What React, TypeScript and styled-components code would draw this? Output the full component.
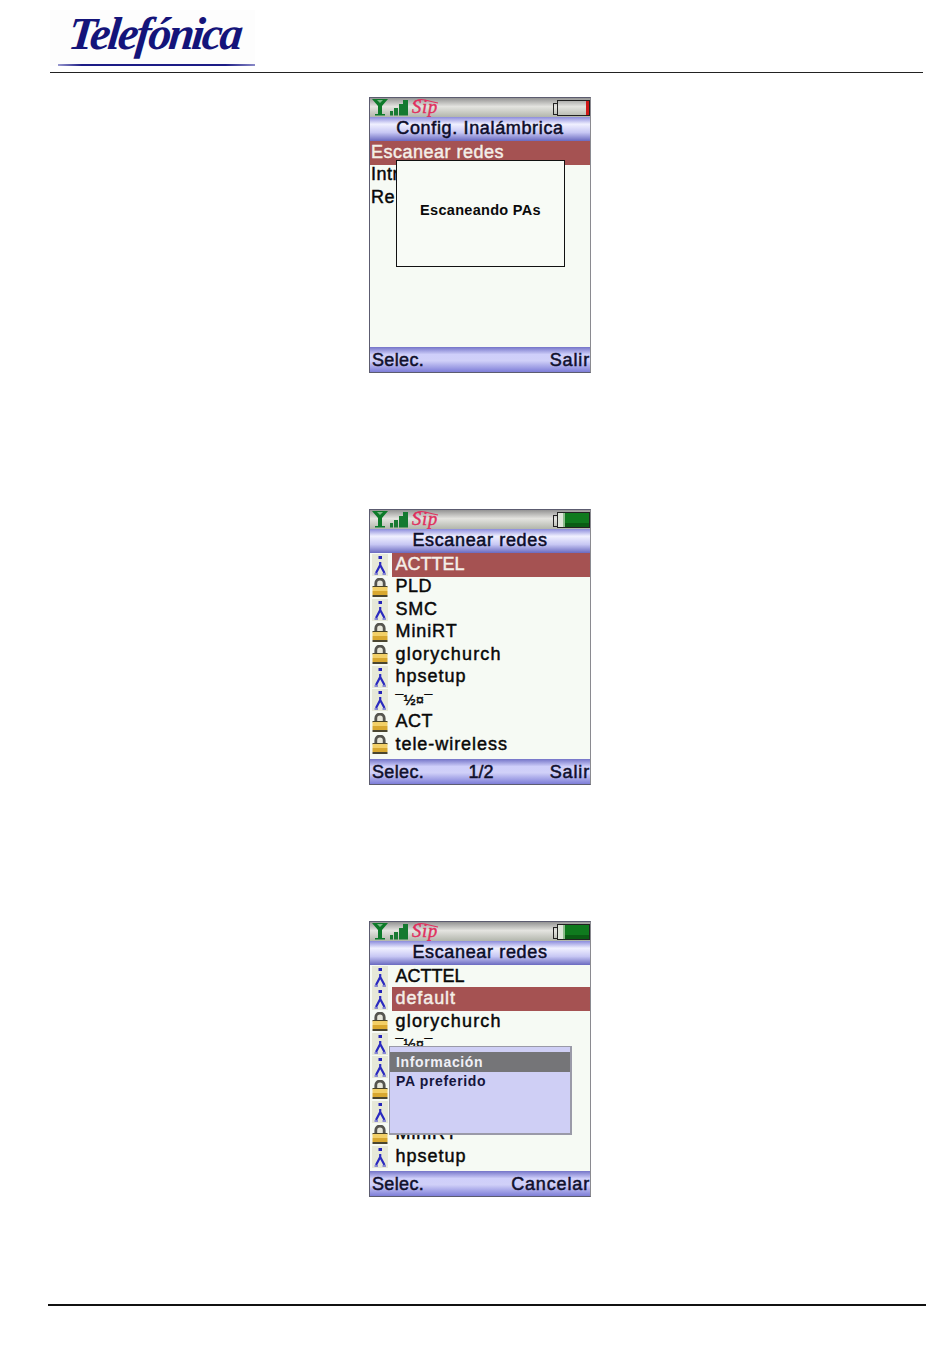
import React from "react";
import styled, { createGlobalStyle } from "styled-components";

const Global = createGlobalStyle`
  html, body { margin: 0; padding: 0; background: #fff; }
  body { font-family: "Liberation Sans", Arial, sans-serif; }
`;

const Page = styled.div`
  width: 950px;
  height: 1360px;
  background: #fff;
  display: flex;
  flex-direction: column;
  overflow: hidden;
`;

const Header = styled.header`
  width: 873px;
  height: 62px;
  margin-left: 50px;
  border-bottom: 1px solid #222;
  padding-top: 10px;
`;

const LogoBox = styled.div`
  width: 205px;
  height: 56px;
  background: #fdfdfd;
  display: flex;
  flex-direction: column;
  align-items: center;
  box-sizing: border-box;
  padding-left: 4px;
`;

const LogoText = styled.span`
  font-family: "Liberation Serif", serif;
  font-style: italic;
  font-weight: 700;
  font-size: 46px;
  line-height: 47px;
  letter-spacing: -2.6px;
  color: #14147a;
  transform: skewX(-6deg);
  flex: none;
`;

const LogoRule = styled.div`
  width: 197px;
  height: 2px;
  margin-top: 7px;
  align-self: flex-end;
  background: linear-gradient(90deg, #9a9ad0, #1c1c86 12%, #1c1c86 85%, #8a8ac8);
`;

const Main = styled.main`
  display: flex;
  flex-direction: column;
  align-items: center;
  gap: 136px;
  padding-left: 10px;
  margin-top: 24px;
`;

const Phone = styled.section`
  position: relative;
  width: 222px;
  height: 276px;
  box-sizing: border-box;
  border: 1px solid #5c5c70;
  border-right-color: #8a8a90;
  background: #f6faf4;
  display: flex;
  flex-direction: column;
  overflow: hidden;
`;

const StatusBar = styled.div`
  height: 19px;
  flex: none;
  display: flex;
  align-items: center;
  justify-content: space-between;
  padding: 0 0 0 1px;
  background: linear-gradient(#949494, #e4e4e0 45%, #b2b6ac);
`;

const TitleBar = styled.div`
  height: 24px;
  flex: none;
  box-sizing: border-box;
  padding-bottom: 1px;
  display: flex;
  align-items: center;
  justify-content: center;
  font-size: 18px;
  letter-spacing: 0.65px;
  color: #0c0c28;
  -webkit-text-stroke: 0.5px #0c0c28;
  background: linear-gradient(#8c8cdc, #f0f0ff 30%, #c8c8f4 64%, #6a6ac0);
`;

const List = styled.div`
  flex: 1;
  display: flex;
  flex-direction: column;
  padding-top: 0.5px;
`;

const Row = styled.div`
  height: 22.5px;
  flex: none;
  display: flex;
  align-items: center;
  font-size: 18px;
  color: #080808;
  -webkit-text-stroke: 0.45px #080808;
`;

const RowIcon = styled.span`
  width: 22px;
  flex: none;
  display: flex;
  justify-content: center;
  padding-right: 3px;
  box-sizing: border-box;
`;

const RowLabel = styled.span<{ $selected?: boolean; $plain?: boolean; $spacing?: number }>`
  flex: 1;
  height: 24px;
  line-height: 23px;
  margin: -0.75px 0;
  padding-left: ${(p) => (p.$plain ? "1px" : "3.5px")};
  letter-spacing: ${(p) => p.$spacing ?? 0.5}px;
  white-space: nowrap;
  background: ${(p) => (p.$selected ? "#a55252" : "transparent")};
  color: ${(p) => (p.$selected ? "#f4efe8" : "inherit")};
  -webkit-text-stroke-color: ${(p) => (p.$selected ? "#f4efe8" : "inherit")};
`;

const SmallGlyphs = styled.span`
  font-size: 14px;
  letter-spacing: 0.6px;
`;

const SoftKeys = styled.div`
  height: 25px;
  flex: none;
  display: grid;
  grid-template-columns: 1fr auto 1fr;
  align-items: center;
  padding: 1px 0 0 2px;
  box-sizing: border-box;
  font-size: 18px;
  color: #10102c;
  -webkit-text-stroke: 0.5px #10102c;
  background: linear-gradient(#7474c8, #cfcffa 30%, #d0d0f8 55%, #7e7ed8);
`;

const SoftLeft = styled.span`
  letter-spacing: 0.35px;
`;

const SoftRight = styled.span`
  justify-self: end;
  letter-spacing: 0.85px;
`;

const ScanDialog = styled.div`
  position: absolute;
  left: 26px;
  top: 62px;
  width: 169px;
  height: 107px;
  box-sizing: border-box;
  border: 1px solid #111;
  background: #f8fbf6;
  display: flex;
  align-items: center;
  justify-content: center;
  padding-bottom: 7px;
  font-size: 14.5px;
  font-weight: 700;
  letter-spacing: 0.3px;
  color: #0a0a0a;
`;

const InfoPopup = styled.div`
  position: absolute;
  left: 19px;
  top: 124px;
  width: 183px;
  height: 89px;
  box-sizing: border-box;
  border: 1px solid #9a9aa8;
  border-width: 1px 2px 2px 1px;
  background: #cfcff5;
  padding-top: 5px;
  font-size: 14px;
  font-weight: 700;
  letter-spacing: 0.65px;
`;

const PopupHead = styled.div`
  height: 20px;
  line-height: 20px;
  padding-left: 6px;
  background: #757578;
  color: #f0f0f6;
`;

const PopupLine = styled.div`
  height: 20px;
  line-height: 19px;
  padding-left: 6px;
  color: #15153c;
`;

const Footer = styled.footer`
  width: 878px;
  margin: 107px 0 0 48px;
  border-top: 2px solid #111;
`;

const Signal = () => (
  <svg width="68" height="19" viewBox="0 0 68 19">
    <path d="M1 1h16l-6 7v9H7V8z" fill="#0d7a2a" />
    <path d="M6 2h6l-3 3z" fill="#7fb88a" />
    <rect x="4" y="16" width="10" height="1.5" fill="#0d7a2a" />
    <rect x="19" y="13" width="3" height="4.5" fill="#1a7a34" />
    <rect x="23" y="10" width="4" height="7.5" fill="#1a7a34" />
    <rect x="28" y="6" width="4" height="11.5" fill="#157a30" />
    <rect x="32" y="2" width="5" height="15.5" fill="#157a30" />
    <text x="41" y="14.5" fontFamily="Liberation Serif, serif" fontStyle="italic" fontWeight="400" fontSize="18.5" letterSpacing="0.8" stroke="#e0305e" strokeWidth="0.4" fill="#e0305e">Sip</text>
    <path d="M42 6q4-6 12-4t13 3" stroke="#e0305e" strokeWidth="1.2" fill="none" />
  </svg>
);

const Battery = ({ full }: { full?: boolean }) => (
  <svg width="37" height="16" viewBox="0 0 37 16">
    <rect x="0.5" y="3.5" width="4" height="11" fill="none" stroke="#222" />
    {full ? (
      <>
        <rect x="4" y="1" width="33" height="14" fill="#dfe6da" />
        <rect x="12" y="1" width="25" height="14" fill="#0f7a1e" />
        <rect x="12" y="11" width="25" height="4" fill="#0a5c14" />
        <rect x="10" y="1" width="2" height="14" fill="#8cbc8c" />
      </>
    ) : (
      <rect x="33" y="1" width="4" height="14" fill="#d01818" />
    )}
    <rect x="4.5" y="0.5" width="32" height="15" fill="none" stroke="#222" />
  </svg>
);

const Antenna = () => (
  <svg width="16" height="22" viewBox="0 0 16 22">
    <rect x="0" y="0" width="16" height="22" fill="#e6e8d8" />
    <rect x="6.5" y="2" width="3.5" height="3" fill="#2424b8" />
    <path d="M8.2 8V13M8.2 11L4 19M8.2 11L12.5 19" stroke="#2a2ac0" strokeWidth="2.2" fill="none" />
    <path d="M2.5 20h3.5M10.5 20h3.5" stroke="#6a6ad0" strokeWidth="1.6" />
  </svg>
);

const Lock = () => (
  <svg width="16" height="19" viewBox="0 0 16 19">
    <path d="M3.8 9V5.2a4.2 4.2 0 0 1 8.4 0V9" fill="#e8e8dc" stroke="#55554f" strokeWidth="2.8" />
    <rect x="0.5" y="8" width="15" height="1.4" fill="#4a4428" />
    <rect x="0.5" y="9" width="15" height="4" fill="#f2d068" />
    <rect x="0.5" y="13" width="15" height="4" fill="#d8a830" />
    <rect x="0.5" y="17" width="15" height="2" fill="#4a4630" />
  </svg>
);

type Item = { name: React.ReactNode; lock?: boolean; spacing?: number };

const OddName = () => <SmallGlyphs>¯½¤¯</SmallGlyphs>;

const page2: Item[] = [
  { name: "ACTTEL", spacing: 0 },
  { name: "PLD", lock: true },
  { name: "SMC", spacing: 0.7 },
  { name: "MiniRT", lock: true, spacing: 0.9 },
  { name: "glorychurch", lock: true, spacing: 1.2 },
  { name: "hpsetup", spacing: 1 },
  { name: <OddName /> },
  { name: "ACT", lock: true },
  { name: "tele-wireless", lock: true, spacing: 0.95 },
];

const page3: Item[] = [
  { name: "ACTTEL", spacing: 0 },
  { name: "default", spacing: 0.9 },
  { name: "glorychurch", lock: true, spacing: 1.2 },
  { name: <OddName /> },
  { name: "" },
  { name: "", lock: true },
  { name: "" },
  { name: "MiniRT", lock: true, spacing: 0.9 },
  { name: "hpsetup", spacing: 1 },
];

const Top = ({ title, full }: { title: string; full?: boolean }) => (
  <>
    <StatusBar>
      <Signal />
      <Battery full={full} />
    </StatusBar>
    <TitleBar>{title}</TitleBar>
  </>
);

const Networks = ({ items, selected }: { items: Item[]; selected: number }) => (
  <List>
    {items.map((it, i) => (
      <Row key={i}>
        <RowIcon>{it.lock ? <Lock /> : <Antenna />}</RowIcon>
        <RowLabel $selected={i === selected} $spacing={it.spacing}>
          {it.name}
        </RowLabel>
      </Row>
    ))}
  </List>
);

const Keys = ({ middle, right }: { middle?: string; right: string }) => (
  <SoftKeys>
    <SoftLeft>Selec.</SoftLeft>
    <span>{middle}</span>
    <SoftRight>{right}</SoftRight>
  </SoftKeys>
);

export default function App() {
  return (
    <Page>
      <Global />
      <Header>
        <LogoBox>
          <LogoText>Telefónica</LogoText>
          <LogoRule />
        </LogoBox>
      </Header>
      <Main>
        <Phone>
          <Top title="Config. Inalámbrica" />
          <List>
            <Row>
              <RowLabel $plain $selected>
                Escanear redes
              </RowLabel>
            </Row>
            <Row>
              <RowLabel $plain>Intr</RowLabel>
            </Row>
            <Row>
              <RowLabel $plain>Re</RowLabel>
            </Row>
          </List>
          <Keys right="Salir" />
          <ScanDialog>Escaneando PAs</ScanDialog>
        </Phone>
        <Phone>
          <Top title="Escanear redes" full />
          <Networks items={page2} selected={0} />
          <Keys middle="1/2" right="Salir" />
        </Phone>
        <Phone>
          <Top title="Escanear redes" full />
          <Networks items={page3} selected={1} />
          <Keys right="Cancelar" />
          <InfoPopup>
            <PopupHead>Información</PopupHead>
            <PopupLine>PA preferido</PopupLine>
          </InfoPopup>
        </Phone>
      </Main>
      <Footer />
    </Page>
  );
}
